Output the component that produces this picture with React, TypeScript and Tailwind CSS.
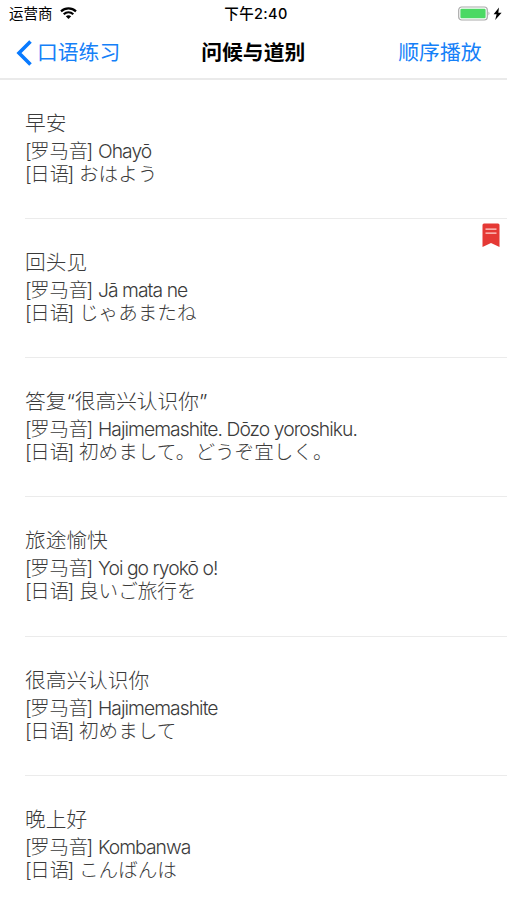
type Phrase = { title: string; romaji: string; japanese: string; marked?: boolean };

const phrases: Phrase[] = [
  { title: '早安', romaji: 'Ohayō', japanese: 'おはよう' },
  { title: '回头见', romaji: 'Jā mata ne', japanese: 'じゃあまたね', marked: true },
  { title: '答复“很高兴认识你”', romaji: 'Hajimemashite. Dōzo yoroshiku.', japanese: '初めまして。どうぞ宜しく。' },
  { title: '旅途愉快', romaji: 'Yoi go ryokō o!', japanese: '良いご旅行を' },
  { title: '很高兴认识你', romaji: 'Hajimemashite', japanese: '初めまして' },
  { title: '晚上好', romaji: 'Kombanwa', japanese: 'こんばんは' },
];

function StatusBar() {
  return (
    <div className="grid h-[28px] grid-cols-3 items-center pl-[9px] pr-[5px] text-[14.5px] leading-none text-black">
      <div className="flex items-center gap-[7px]">
        <span>运营商</span>
        <svg className="-mt-[3px]" width="17" height="12" viewBox="0 0 17 12" fill="none" stroke="black" strokeWidth="2.2">
          <path d="M1 4.4C5.3.4 11.7.4 16 4.4M3.7 7.2c2.8-2.5 6.8-2.5 9.6 0" />
          <path d="M5.8 9.3c1.7-1.4 3.7-1.4 5.4 0L8.5 12z" fill="black" stroke="none" />
        </svg>
      </div>
      <div className="whitespace-nowrap pl-px text-center font-medium tracking-[0.35px]">下午2:40</div>
      <div className="flex items-center justify-end">
        <svg className="-mt-[2px]" width="44" height="15" viewBox="0 0 44 15">
          <rect x=".7" y="1" width="28.6" height="13" rx="3" fill="white" stroke="#aaa" strokeWidth="1.2" />
          <rect x="2.4" y="2.7" width="25.2" height="9.6" rx="1.2" fill="#4cd964" />
          <path d="M30.5 5.6q2 1.9 0 3.8z" fill="#aaa" />
          <path d="M41 1.5 35.6 8.3h3L37.2 14l6.4-7.3h-3.3z" fill="black" />
        </svg>
      </div>
    </div>
  );
}

function NavigationBar() {
  return (
    <nav className="grid h-[50px] grid-cols-3 items-center pl-4 pr-[25.5px] pt-px text-[20.8px] leading-none text-[#1580f8]">
      <button className="flex items-center gap-[5px] whitespace-nowrap">
        <svg className="-mt-px" width="16" height="26" viewBox="0 0 16 26" fill="none" stroke="#087aff" strokeWidth="3.6">
          <path d="M14.5 1.5 3 13l11.5 11.5" />
        </svg>
        <span>口语练习</span>
      </button>
      <h1 className="whitespace-nowrap pl-[9px] text-center font-bold text-black">问候与道别</h1>
      <button className="whitespace-nowrap text-right">顺序播放</button>
    </nav>
  );
}

function Bookmark() {
  return (
    <svg className="absolute right-[7px] top-[4px]" width="18" height="25" viewBox="0 0 18 25">
      <path d="M.5 2Q.5.5 2 .5h14q1.5 0 1.5 1.5v22L9 20 .5 24z" fill="#e53935" />
      <path d="M3.5 6.2h11M3.5 10.2h11" stroke="#ffd5d1" strokeWidth="1.3" />
    </svg>
  );
}

function Label({ text }: { text: string }) {
  return (
    <>
      <span className="-mr-[1.5px]">[</span>
      {text}
      <span className="-ml-[1.5px]">]</span>
    </>
  );
}

function PhraseRow({ phrase }: { phrase: Phrase }) {
  return (
    <li className="relative h-[139.3px] pl-[25px]">
      <div className="flex h-full flex-col border-b-[1.5px] border-[#ebebeb] pt-[32px] text-[#3b3b3b]">
        <h2 className="h-[28px] whitespace-nowrap text-[20.7px] leading-[24px]">{phrase.title}</h2>
        <p className="flex h-[22px] items-baseline whitespace-nowrap text-[19.3px] leading-[22px]">
          <span className="w-[73px] shrink-0"><Label text="罗马音" /></span>
          <span className="tracking-[-0.95px]">{phrase.romaji}</span>
        </p>
        <p className="flex h-[22px] items-baseline whitespace-nowrap text-[19.4px] leading-[22px]">
          <span className="w-[54px] shrink-0"><Label text="日语" /></span>
          <span lang="ja" className="font-['Noto_Sans_CJK_JP',sans-serif] text-[19.6px]">{phrase.japanese}</span>
        </p>
      </div>
      {phrase.marked && <Bookmark />}
    </li>
  );
}

export default function App() {
  return (
    <main lang="zh-CN" className="h-[900px] overflow-hidden bg-white font-['Inter','Noto_Sans_CJK_SC',sans-serif]">
      <header className="h-[79.5px] border-b-2 border-[#eaeaea]">
        <StatusBar />
        <NavigationBar />
      </header>
      <ul className="font-['Inter','Noto_Sans_CJK_SC',sans-serif] font-light">
        {phrases.map((phrase) => <PhraseRow key={phrase.title} phrase={phrase} />)}
      </ul>
    </main>
  );
}
